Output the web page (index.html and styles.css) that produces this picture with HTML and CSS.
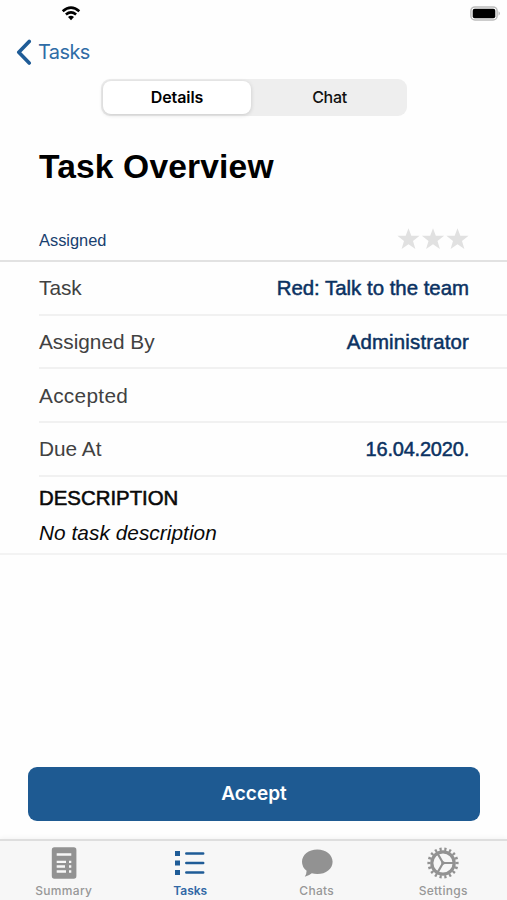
FILE: index.html
```html
<!DOCTYPE html>
<html lang="en">
<head>
<meta charset="utf-8">
<title>Task Overview</title>
<link rel="stylesheet" href="styles.css">
</head>
<body>
<div class="screen">
  <div class="status-bar">
    <svg class="wifi" width="20" height="15" viewBox="0 0 20 15" fill="none" stroke="#000" stroke-width="2.7"><path d="M1.7 5.2Q10 -1.8 18.3 5.2"/><path d="M4.9 8.5Q10 4.3 15.1 8.5"/><path d="M7 11Q10 8.3 13 11L10 14.2Z" fill="#000" stroke="none"/></svg>
    <svg class="battery" width="31" height="15" viewBox="0 0 31 15"><rect x=".9" y=".9" width="26.2" height="13" rx="4" fill="#fff" stroke="#bcbcbc" stroke-width="1.5"/><rect x="2.7" y="2.7" width="22.6" height="9.6" rx="2" fill="#000"/><path d="M28.6 5.2Q31 7.4 28.6 9.7Z" fill="#aaa"/></svg>
  </div>
  <nav class="nav">
    <svg width="16" height="26" viewBox="0 0 16 26" fill="none" stroke="#1f5c97" stroke-width="3.6" stroke-linecap="round" stroke-linejoin="round"><path d="M13.2 2.4L2.8 13.3L13.2 24"/></svg>
    <a class="back">Tasks</a>
  </nav>
  <div class="segmented">
    <div class="segment selected"><span>Details</span></div>
    <div class="segment"><span>Chat</span></div>
  </div>
  <h1 class="title">Task Overview</h1>
  <div class="state">
    <span class="state-name">Assigned</span>
    <svg class="stars" width="73" height="22" viewBox="0 0 73 22" fill="#e1e1e1"><defs><path id="star" d="M11.5 .3L14.3 7.8H22.6L16 12.9L18.4 20.9L11.5 16.2L4.6 20.9L7 12.9L.4 7.8H8.7Z"/></defs><use href="#star"/><use href="#star" x="24.5"/><use href="#star" x="49"/></svg>
  </div>
  <main class="rows">
    <div class="row"><span class="label">Task</span><span class="value v-task">Red: Talk to the team</span></div>
    <div class="row"><span class="label">Assigned By</span><span class="value v-by">Administrator</span></div>
    <div class="row"><span class="label accepted">Accepted</span></div>
    <div class="row"><span class="label">Due At</span><span class="value v-due">16.04.2020.</span></div>
  </main>
  <section class="description">
    <h2>DESCRIPTION</h2>
    <p>No task description</p>
  </section>
  <button class="accept">Accept</button>
  <footer class="tabs">
    <div class="tab">
      <svg width="34" height="34" viewBox="-17 -17 34 34"><rect x="-12.2" y="-15.7" width="24.6" height="31.4" rx="2.6" fill="#929292"/><path d="M-7.3 -8.5H7.3M-7.3 -1.2H2M5 -1.2H7.3M-7.3 3.5H1M5 3.5H7.3M-7.3 8.5H2M5 8.5H7.3" fill="none" stroke="#f7f7f7" stroke-width="2.3"/></svg>
      <span>Summary</span>
    </div>
    <div class="tab active">
      <svg width="34" height="34" viewBox="-17 -17 34 34" fill="#1f5c97"><path d="M-15 -12h5v5h-5zM-15 -2.5h5v5h-5zM-15 7h5v5h-5z"/><path d="M-3.7 -9.5H13.2M-3.7 0H13.2M-3.7 9.5H13.2" fill="none" stroke="#1f5c97" stroke-width="2.5" stroke-linecap="round"/></svg>
      <span>Tasks</span>
    </div>
    <div class="tab">
      <svg width="34" height="34" viewBox="-17 -17 34 34" fill="#929292"><path d="M.3 -13.6C9 -13.6 15.6 -8.4 15.6 -1.3S9 11 .3 11Q-2.7 11 -5.2 10.3Q-8 12.8 -12.2 13.7Q-10.4 11 -10.4 7.8Q-15 4.2 -15 -1.3C-15 -8.4 -8.4 -13.6 .3 -13.6Z"/></svg>
      <span>Chats</span>
    </div>
    <div class="tab">
      <svg width="34" height="34" viewBox="-17 -17 34 34" fill="none" stroke="#929292"><circle r="14" stroke-width="3.2" pathLength="180" stroke-dasharray="4.5 5.5" stroke-dashoffset="2.25"/><circle r="11.2" stroke-width="3.2"/><path d="M0 0H10M0 0L-5 -8.7M0 0L-5 8.7" stroke-width="2.2"/><circle r="1.8" fill="#929292" stroke="none"/></svg>
      <span>Settings</span>
    </div>
  </footer>
</div>
</body>
</html>
```

FILE: styles.css
```css
* { box-sizing: border-box; }
body { margin: 0; background: #fff; font-family: "Liberation Sans", Arial, sans-serif; }
.screen { width: 507px; height: 900px; display: flex; flex-direction: column; overflow: hidden; background: #fefefe; }
.status-bar { height: 33px; flex: none; display: flex; justify-content: space-between; padding: 6px 6px 0 61px; }
.nav { height: 46px; flex: none; display: flex; align-items: flex-start; padding: 6px 0 0 16px; gap: 6px; }
.back { font: 20px/27px Inter, sans-serif; color: #2f6ca6; letter-spacing: -.6px; }
.segmented { width: 306px; height: 37px; flex: none; margin-left: 101px; padding: 2px; display: flex; border-radius: 9px; background: #eee; }
.segment { flex: 1; display: flex; align-items: center; justify-content: center; padding-bottom: 1px; font: 500 16px/20px Inter, sans-serif; color: #111; letter-spacing: -.3px; }
.segment.selected { flex: none; width: 148px; border-radius: 8px; background: #fff; box-shadow: 0 1px 4px rgba(0,0,0,.16); font-weight: 600; color: #000; margin-right: 3px; letter-spacing: -.1px; }
.title { margin: 29px 0 0 39px; height: 44px; flex: none; font-size: 33.6px; line-height: 44px; font-weight: 700; letter-spacing: .15px; color: #000; white-space: nowrap; }
.state { height: 73px; flex: none; padding: 30px 37.5px 1px 39px; display: flex; justify-content: space-between; align-items: center; border-bottom: 2px solid #e2e2e2; }
.state-name { padding-top: 1px; font-size: 16.4px; line-height: 22px; color: #18406f; }
.rows { flex: none; padding-left: 39px; }
.row { height: 53.7px; padding-right: 38px; display: flex; align-items: center; justify-content: space-between; border-bottom: 2px solid #f1f1f1; font-size: 20.4px; line-height: 24px; }
.label { color: #414141; font-size: 20.8px; }
.label.accepted { letter-spacing: .3px; padding-top: 1px; }
.value { color: #0b3262; -webkit-text-stroke: .5px #0b3262; }
.v-by { letter-spacing: .17px; }
.v-due { font-size: 20px; letter-spacing: -.2px; }
.description { height: 78px; flex: none; padding: 6px 0 0 39px; border-bottom: 2px solid #f3f3f3; }
.description h2, .description p { margin: 0; font-size: 20.4px; line-height: 30px; font-weight: 400; color: #090909; }
.description h2 { -webkit-text-stroke: .55px #090909; }
.description p { margin-top: 5px; font-size: 20.8px; font-style: italic; letter-spacing: .05px; }
.accept { width: 452px; height: 54px; flex: none; margin: 212px 0 0 28px; padding: 1px 0 0; border: 0; border-radius: 9px; background: #1e5a92; color: #fff; font: 600 19px/24px Inter, sans-serif; }
.tabs { flex: 1; margin-top: 18px; padding-left: .5px; display: grid; grid-template-columns: repeat(4, 126.5px); background: #f7f7f7; border-top: 2px solid #dedede; box-shadow: 0 -1px 5px rgba(0,0,0,.05); }
.tab { display: flex; flex-direction: column; align-items: center; padding-top: 5px; color: #989898; font: 500 12px/16px Inter, sans-serif; letter-spacing: .3px; }
.tab svg { flex: none; margin-bottom: 3px; }
.tab.active { color: #3168a5; font-weight: 600; letter-spacing: 0; }
```
